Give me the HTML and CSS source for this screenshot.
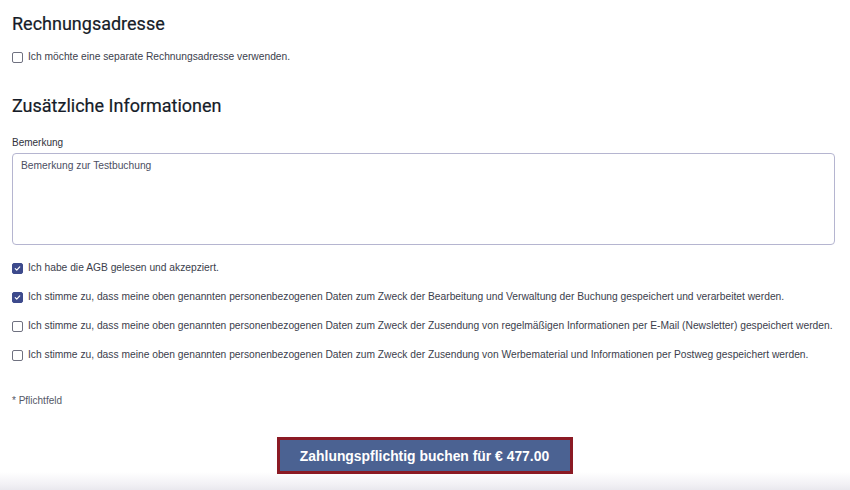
FILE: index.html
```html
<!DOCTYPE html>
<html lang="de">
<head>
<meta charset="utf-8">
<link rel="stylesheet" href="styles.css">
</head>
<body>
<main class="page">
  <section class="section">
    <h2 class="heading">Rechnungsadresse</h2>
    <label class="check"><span class="box"></span><span class="check-text">Ich möchte eine separate Rechnungsadresse verwenden.</span></label>
  </section>

  <section class="section section-info">
    <h2 class="heading">Zusätzliche Informationen</h2>
    <div class="field-label">Bemerkung</div>
    <div class="textarea">Bemerkung zur Testbuchung</div>

    <div class="checks">
      <label class="check"><span class="box box-on"><svg viewBox="0 0 12 12"><path d="M3 6.2l2 2 4-4.4" fill="none" stroke="#fff" stroke-width="1.6" stroke-linecap="round" stroke-linejoin="round"/></svg></span><span class="check-text">Ich habe die AGB gelesen und akzepziert.</span></label>
      <label class="check"><span class="box box-on"><svg viewBox="0 0 12 12"><path d="M3 6.2l2 2 4-4.4" fill="none" stroke="#fff" stroke-width="1.6" stroke-linecap="round" stroke-linejoin="round"/></svg></span><span class="check-text">Ich stimme zu, dass meine oben genannten personenbezogenen Daten zum Zweck der Bearbeitung und Verwaltung der Buchung gespeichert und verarbeitet werden.</span></label>
      <label class="check"><span class="box"></span><span class="check-text">Ich stimme zu, dass meine oben genannten personenbezogenen Daten zum Zweck der Zusendung von regelmäßigen Informationen per E-Mail (Newsletter) gespeichert werden.</span></label>
      <label class="check"><span class="box"></span><span class="check-text">Ich stimme zu, dass meine oben genannten personenbezogenen Daten zum Zweck der Zusendung von Werbematerial und Informationen per Postweg gespeichert werden.</span></label>
    </div>

    <p class="note">* Pflichtfeld</p>
  </section>

  <div class="actions">
    <button class="submit" type="button">Zahlungspflichtig buchen für € 477.00</button>
  </div>
</main>
</body>
</html>
```

FILE: styles.css
```css
html, body {
  margin: 0;
  padding: 0;
  height: 100%;
}
body {
  background: linear-gradient(to bottom, #ffffff 0, #ffffff 472px, #f2f1f5 484px, #e9e8ee 490px);
  font-family: "Liberation Sans", Arial, sans-serif;
  color: #3a3d4a;
}
.page {
  padding: 13px 15px 0 12px;
}
.heading {
  margin: 0;
  font-family: Roboto, "Liberation Sans", sans-serif;
  font-weight: 400;
  font-size: 18px;
  line-height: 22px;
  color: #161c28;
  -webkit-text-stroke: 0.2px #161c28;
}
.section + .section {
  margin-top: 31px;
}
.section > .check {
  margin-top: 15px;
}
.check {
  display: flex;
  align-items: center;
  gap: 5px;
  height: 14px;
}
.box {
  width: 9px;
  height: 9px;
  border: 1px solid #6f7180;
  border-radius: 2px;
  background: #fff;
  flex: none;
  display: flex;
}
.box-on {
  background: #3d4a8c;
  border-color: #3d4a8c;
}
.box svg {
  width: 9px;
  height: 9px;
}
.check-text {
  font-size: 10.25px;
  line-height: 14px;
  color: #3b3e4c;
  white-space: nowrap;
}
.field-label {
  margin-top: 19px;
  font-size: 10px;
  line-height: 14px;
  color: #30323c;
}
.textarea {
  margin-top: 3px;
  height: 92px;
  box-sizing: border-box;
  border: 1px solid #b5b5d0;
  border-radius: 4px;
  padding: 5px 8px;
  font-size: 10.25px;
  line-height: 14px;
  color: #4b4e62;
}
.checks {
  margin-top: 16px;
  display: flex;
  flex-direction: column;
  gap: 15px;
}
.note {
  margin: 32px 0 0;
  font-size: 10px;
  line-height: 14px;
  color: #555866;
}
.actions {
  display: flex;
  justify-content: center;
  margin-top: 29px;
  padding-left: 2px;
}
.submit {
  width: 296px;
  height: 37px;
  box-sizing: border-box;
  border: 3px solid #8b1a24;
  background: #4b6292;
  color: #fff;
  font-family: "Liberation Sans", Arial, sans-serif;
  font-weight: 700;
  font-size: 13.9px;
  padding: 0;
}
```
